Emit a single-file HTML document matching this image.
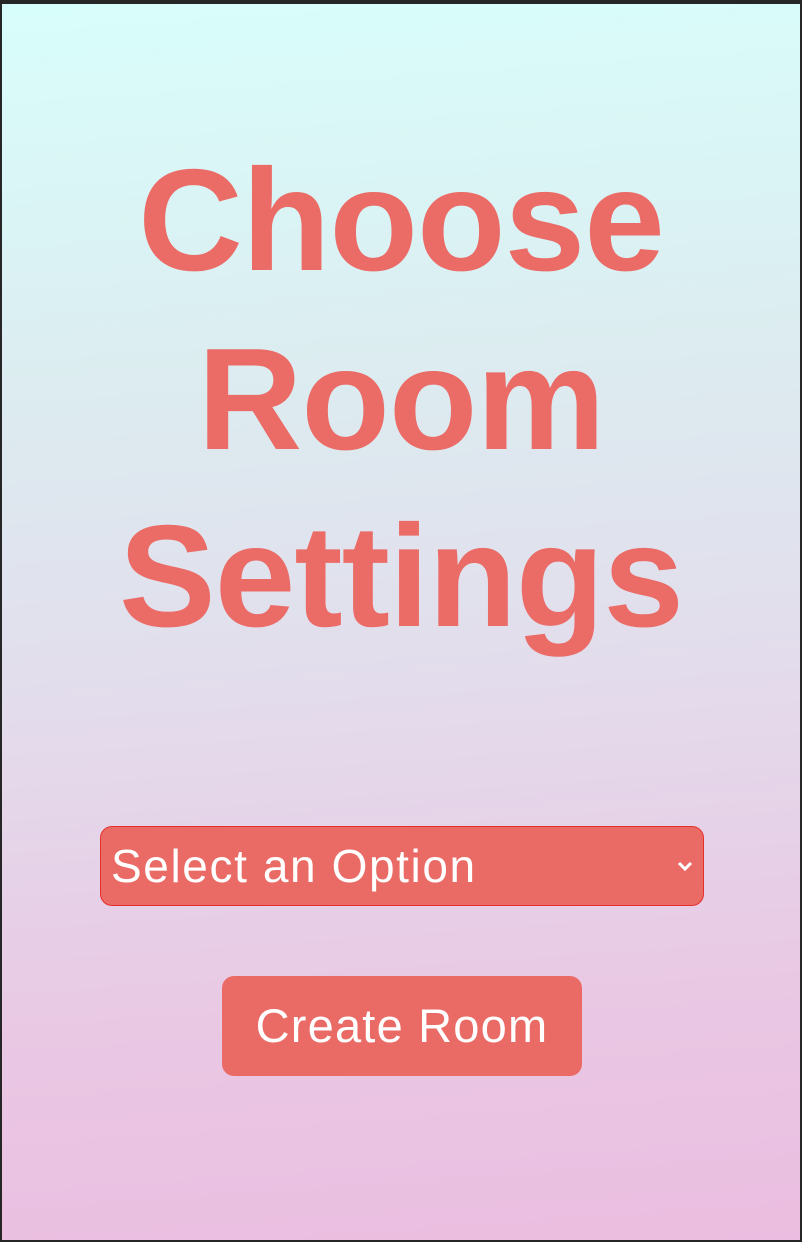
<!DOCTYPE html>
<html><head><style>
html,body{margin:0;padding:0;}
body{width:802px;height:1242px;background:#262626;position:relative;overflow:hidden;font-family:"Liberation Sans",sans-serif;}
.frame{position:absolute;left:2px;top:4px;width:798px;height:1236px;background:linear-gradient(176deg,#d8fefb 0%,#dcecf0 30%,#e3dcec 55%,#e9c8e4 80%,#ebbde0 100%);}
.t{position:absolute;left:0;width:802px;text-align:center;color:#eb6b66;font-weight:bold;font-size:145px;line-height:145px;letter-spacing:-1px;}
.sel{position:absolute;left:100px;top:826px;width:602px;height:78px;background:#ea6b66;border:1px solid #e5302a;border-radius:12px;box-sizing:content-box;}
.sel span{position:absolute;left:10px;top:14px;color:#fff;font-size:46px;line-height:50px;letter-spacing:1.6px;}
.sel svg{position:absolute;left:575px;top:31px;}
.btn{position:absolute;left:222px;top:976px;width:360px;height:100px;background:#ea6b66;border-radius:12px;color:#fff;font-size:47px;text-align:center;line-height:100px;letter-spacing:1.2px;}
</style></head><body>
<div class="frame"></div>
<div class="t" style="top:148px">Choose</div>
<div class="t" style="top:327px">Room</div>
<div class="t" style="top:504px">Settings</div>
<div class="sel"><span>Select an Option</span><svg width="18" height="16" viewBox="0 0 18 16"><path d="M3 5 L9 11 L15 5" stroke="#fff" stroke-width="3" fill="none"/></svg></div>
<div class="btn">Create Room</div>
</body></html>
